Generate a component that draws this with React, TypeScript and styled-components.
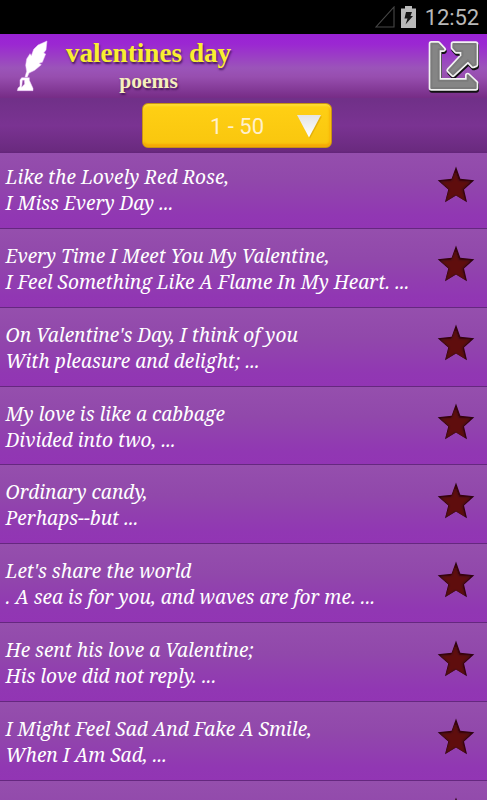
import React from "react";
import styled, { createGlobalStyle } from "styled-components";

const Global = createGlobalStyle`
  * { box-sizing: border-box; }
  body { margin: 0; background: #000; }
`;

const Screen = styled.main`
  display: flex;
  flex-direction: column;
  width: 487px;
  height: 800px;
  overflow: hidden;
`;

const StatusBar = styled.div`
  display: flex;
  flex: none;
  justify-content: flex-end;
  align-items: center;
  height: 34px;
  padding-right: 8px;
  background: #000;
`;

const Clock = styled.span`
  margin-left: 9px;
  padding-top: 1px;
  font: 22px/34px Roboto, sans-serif;
  letter-spacing: -0.1px;
  color: #b9b9b9;
`;

const Header = styled.header`
  display: flex;
  flex: none;
  align-items: flex-start;
  height: 64px;
  padding: 5px 6px 0 16px;
  background: linear-gradient(#9922d4 0, #9b27d2 10px, #9b54b9 34px, #974eaf 43px, #762c86 64px);
`;

const Titles = styled.div`
  display: flex;
  flex-direction: column;
  align-items: center;
  width: 165px;
  margin-left: 18px;
  margin-right: auto;
  font-family: "Liberation Serif", serif;
  font-weight: 700;
  text-shadow: 1px 2px 2px #48185b;
  white-space: nowrap;
`;

const Title = styled.h1`
  margin: 0;
  font-size: 27.2px;
  line-height: 28px;
  color: #f9ef31;
`;

const Subtitle = styled.h2`
  margin: 2px 0 0;
  font-size: 21.5px;
  line-height: 24px;
  color: #f5f0bd;
`;

const FilterBar = styled.div`
  display: flex;
  flex: none;
  justify-content: center;
  align-items: flex-start;
  height: 55px;
  padding: 5px 14px 0 0;
  background: linear-gradient(#703088, #7a3392 50%, #6a2a7f 96%, #632579);
`;

const RangeSelect = styled.button`
  display: grid;
  grid-template-columns: 1fr 24px;
  align-items: center;
  width: 190px;
  height: 45px;
  padding: 1px 11px 0 36px;
  border: 1px solid #c89312;
  border-radius: 6px;
  background: linear-gradient(#ffd014, #f9c60e);
  box-shadow: inset 0 2px 2px #ffdc35, inset 0 -3px 2px #f6a906, inset -2px 0 2px #f8b509;
  color: #fff0ce;
  font: 22px Roboto, sans-serif;
`;

const List = styled.ul`
  flex: 1;
  min-height: 0;
  margin: 0;
  padding: 0;
  overflow: hidden;
  list-style: none;

  & > :first-child { margin-top: -3px; }
`;

const Row = styled.li`
  display: flex;
  align-items: center;
  justify-content: space-between;
  height: 78.86px;
  padding: 0 11px 0 5.5px;
  border-bottom: 1px solid #65287f;
  background: linear-gradient(#954fad, #9148ab 38%, #9137b3 85%, #9235b4);
`;

const Verse = styled.div`
  display: flex;
  flex-direction: column;
  padding-top: 2px;
  font: italic 19.1px/26px "Noto Serif", "DejaVu Serif Condensed", "DejaVu Serif", serif;
  color: #fff;
  white-space: pre;
`;

const Icon = styled.svg`
  display: block;
  flex: none;
`;

const StatusIcons = styled.div`
  display: flex;
  gap: 6px;
  margin-top: -1px;
`;

const StarButton = styled.div`
  margin-bottom: 7px;
`;

const poems: [string, string][] = [
  ["Like the Lovely Red Rose,", "I Miss Every Day ..."],
  ["Every Time I Meet You My Valentine,", "I Feel Something Like A Flame In My Heart. ..."],
  ["On Valentine's Day, I think of you", "With pleasure and delight; ..."],
  ["My love is like a cabbage", "Divided into two, ..."],
  ["Ordinary candy,", "Perhaps--but ..."],
  ["Let's share the world", ". A sea is for you, and waves are for me. ..."],
  ["He sent his love a Valentine;", "His love did not reply. ..."],
  ["I Might Feel Sad And Fake A Smile,", "When I Am Sad, ..."],
  ["", ""],
];

const Signal = () => (
  <Icon width="20" height="22" viewBox="0 0 20 22">
    <path d="M1 21H19V1Z" fill="none" stroke="#484848" strokeWidth="1.1" />
  </Icon>
);

const Battery = () => (
  <Icon width="15" height="22" viewBox="0 0 15 22">
    <path d="M4 0h7v2.500h4V22H0V2.500h4Z" fill="#b9b9b9" />
    <path d="M5 6h6L9.500 10H12L4.500 18.500 6.500 12.500H3.500Z" fill="#161616" />
  </Icon>
);

const Quill = () => (
  <Icon width="32" height="53" viewBox="48 27 96 159">
    <g fill="#fff" stroke="#f3c9ff" strokeWidth="1.5" strokeLinejoin="round">
      <path d="M141 33 114 45 101 58 94 77 90 71 80 87 77 106 80 124 75 141H82L87 129 104 121 124 104 117 100 127 97 137 72 131 69 138 60Z" />
      <path d="M65 143H88V151L99 175V182H52L54 174 60 169V150ZM67 151 65 172 74 162 73 150Z" fillRule="evenodd" />
    </g>
  </Icon>
);

const sharePath =
  "M213 131H233L249 148H235V242H322V226L346 249V264H213Z M279 132H346V194L338 197 323 181 278 223 266 211 306 168V153H288L279 143Z";

const Share = () => (
  <Icon width="54" height="56" viewBox="200 117 162 168">
    <g strokeLinejoin="round">
      <path d={sharePath} fill="#111" stroke="#111" strokeWidth="16" transform="translate(2 6)" />
      <path d={sharePath} fill="#858585" stroke="#f2f2f2" strokeWidth="16" />
      <path d={sharePath} fill="#858585" stroke="#7b7b7b" strokeWidth="6" />
    </g>
  </Icon>
);

const Arrow = () => (
  <Icon width="26" height="25" viewBox="0 0 26 25">
    <defs>
      <linearGradient id="arrow" x2="0" y2="1">
        <stop stopColor="#e4e4e4" />
        <stop offset="1" stopColor="#fff" />
      </linearGradient>
    </defs>
    <path d="M2 2.500H26L14 24.500Z" fill="#b78205" opacity=".35" />
    <path d="M1 1H25L13 23.500Z" fill="url(#arrow)" />
  </Icon>
);

const Star = () => (
  <Icon width="40" height="40" viewBox="0 0 40 40">
    <defs>
      <filter id="soft"><feGaussianBlur stdDeviation=".9" /></filter>
      <clipPath id="star">
        <path d="M20 1.500 24.300 13.700 38.300 15.300 28 24.500 31 37.300 20 30.500 9 37.300 12.300 24.500 1.700 15.300 15.700 13.700Z" />
      </clipPath>
    </defs>
    <g clipPath="url(#star)">
      <path d="M0 0H40V40H0Z" fill="#2b0310" />
      <path d="M19.500 5 23 15.500 35 16.500 26.500 24.500 29.500 37 19.500 30.500 9.500 37 13 24.500 4 16.500 15.700 15.500Z" fill="#5f0e11" filter="url(#soft)" />
    </g>
  </Icon>
);

export default function App() {
  return (
    <Screen>
      <Global />
      <StatusBar>
        <StatusIcons>
          <Signal />
          <Battery />
        </StatusIcons>
        <Clock>12:52</Clock>
      </StatusBar>
      <Header>
        <Quill />
        <Titles>
          <Title>valentines day</Title>
          <Subtitle>poems</Subtitle>
        </Titles>
        <Share />
      </Header>
      <FilterBar>
        <RangeSelect>
          <span>1 - 50</span>
          <Arrow />
        </RangeSelect>
      </FilterBar>
      <List>
        {poems.map((lines, i) => (
          <Row key={i}>
            <Verse>
              {lines.map((text, j) => (
                <span key={j}>{text}</span>
              ))}
            </Verse>
            <StarButton>
              <Star />
            </StarButton>
          </Row>
        ))}
      </List>
    </Screen>
  );
}
